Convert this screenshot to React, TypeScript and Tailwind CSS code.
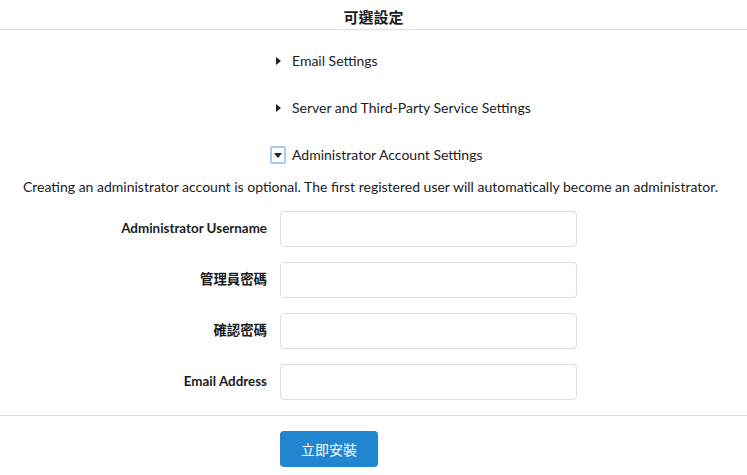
import React from 'react';

const font = { fontFamily: 'Lato, "Noto Sans CJK TC", sans-serif' };

const secciones = [
  { nombre: 'Email Settings', abierto: false },
  { nombre: 'Server and Third-Party Service Settings', abierto: false },
  { nombre: 'Administrator Account Settings', abierto: true },
];

const campos = ['Administrator Username', '管理員密碼', '確認密碼', 'Email Address'];

export default function App() {
  return (
    <div className="min-h-screen w-full bg-white text-[#212121]" style={font}>
      {/* Título */}
      <div className="h-[30px] border-b border-[#dcdcdc] pt-[7px] text-center text-[15px] font-bold leading-[20px] text-[#1b1c1d]">
        可選設定
      </div>

      {/* Secciones */}
      <div className="mt-[21px] flex flex-col gap-[27px] pl-[270px]">
        {secciones.map((s) => (
          <div key={s.nombre} className="flex h-[20px] items-center gap-[6px] text-[14px] leading-[20px]">
            <span
              className={
                s.abierto
                  ? 'flex h-[18px] w-[16px] items-center justify-center rounded-[2px] border-2 border-[#a8c8f8]'
                  : 'flex h-[18px] w-[16px] items-center justify-center'
              }
            >
              {s.abierto ? (
                <span className="block h-0 w-0 border-x-[4px] border-t-[5px] border-x-transparent border-t-[#212121]" />
              ) : (
                <span className="block h-0 w-0 border-y-[4px] border-l-[5px] border-y-transparent border-l-[#212121]" />
              )}
            </span>
            <span>{s.nombre}</span>
          </div>
        ))}
      </div>

      <p className="mt-[12px] pr-[6px] text-center text-[14px] leading-[20px]">
        Creating an administrator account is optional. The first registered user will automatically become an administrator.
      </p>

      {/* Formulario */}
      <div className="mt-[14px] flex flex-col gap-[15px]">
        {campos.map((c) => (
          <div key={c} className="grid grid-cols-[267px_297px] items-center gap-x-[13px]">
            <label className="-mt-[2px] text-right text-[13.4px] font-bold text-[#1b1c1d]">{c}</label>
            <input className="h-[36px] rounded-[4px] border border-[#dedede] bg-white px-3 text-[14px] outline-none" />
          </div>
        ))}
      </div>

      <div className="mt-[15px] border-t border-[#dcdcdc]" />

      <div className="mt-[15px] pl-[280px]">
        <button className="h-[36px] w-[98px] rounded-[4px] bg-[#2185d0] text-[14px] text-white">立即安裝</button>
      </div>
    </div>
  );
}
